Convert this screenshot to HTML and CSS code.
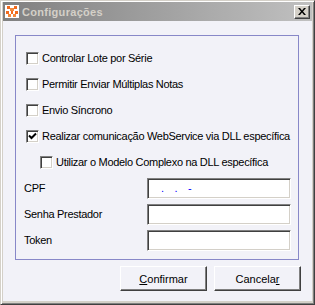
FILE: index.html
```html
<!DOCTYPE html>
<html lang="pt">
<head>
  <meta charset="UTF-8">
  <title>Configurações</title>
  <link rel="stylesheet" href="styles.css">
</head>
<body>

  <div class="window">
    <div class="titlebar">
      <svg class="app-icon" width="14" height="13" viewBox="0 0 14 13">
        <rect x="0" y="0" width="14" height="13" fill="#fff"/>
        <rect x="2" y="1" width="3" height="3" fill="#f26b1d"/>
        <rect x="9" y="1" width="3" height="3" fill="#f26b1d"/>
        <rect x="5" y="3" width="4" height="3" fill="#f58a3c"/>
        <rect x="1" y="6" width="3" height="3" fill="#f26b1d"/>
        <rect x="6" y="6" width="2" height="3" fill="#f26b1d"/>
        <rect x="10" y="6" width="3" height="3" fill="#f26b1d"/>
        <rect x="3" y="9" width="3" height="3" fill="#f58a3c"/>
        <rect x="8" y="9" width="3" height="3" fill="#f58a3c"/>
      </svg>
      <span class="title">Configurações</span>
      <button class="close" type="button">
        <svg width="8" height="7" viewBox="0 0 8 7">
          <path d="M0 0h2l2 2.5L6 0h2L5 3.5 8 7H6L4 4.5 2 7H0l3-3.5z" fill="#000"/>
        </svg>
      </button>
    </div>

    <div class="content">
      <div class="group">
        <label class="check"><span class="box"></span>Controlar Lote por Série</label>
        <label class="check"><span class="box"></span>Permitir Enviar Múltiplas Notas</label>
        <label class="check"><span class="box"></span>Envio Síncrono</label>
        <label class="check"><span class="box">
          <svg width="9" height="9" viewBox="0 0 9 9"><path d="M1 3.5l2.5 2.5L8 1.5" stroke="#000" stroke-width="2" fill="none"/></svg>
        </span>Realizar comunicação WebService via DLL específica</label>
        <label class="check sub"><span class="box"></span>Utilizar o Modelo Complexo na DLL específica</label>

        <div class="field">
          <span>CPF</span>
          <div class="input mask">&nbsp;&nbsp;&nbsp;.&nbsp;&nbsp;&nbsp;.&nbsp;&nbsp;&nbsp;-</div>
        </div>
        <div class="field">
          <span>Senha Prestador</span>
          <div class="input"></div>
        </div>
        <div class="field">
          <span>Token</span>
          <div class="input"></div>
        </div>
      </div>

      <div class="actions">
        <button type="button"><u>C</u>onfirmar</button>
        <button type="button">Cancela<u>r</u></button>
      </div>
    </div>
  </div>

</body>
</html>
```

FILE: styles.css
```css
body { margin: 0; font-family: "Liberation Sans", Arial, sans-serif; font-size: 11px; color: #000; background: #fff; }
.window { width: 315px; height: 305px; box-sizing: border-box; background: #d4d0c8; border: 1px solid; border-color: #d4d0c8 #404040 #404040 #d4d0c8; box-shadow: inset 1px 1px #fff, inset -1px -1px #808080; padding: 1px 2px 3px 2px; display: flex; flex-direction: column; }
.titlebar { height: 19px; display: flex; align-items: center; padding-left: 2px; padding-right: 2px; background: linear-gradient(to right, #808080, #c0c0c0); }
.app-icon { margin-right: 3px; }
.title { color: #d4d0c8; font-weight: bold; letter-spacing: 0.3px; flex: 1; }
.close { width: 16px; height: 14px; padding: 0; background: #d4d0c8; border: 1px solid; border-color: #fff #404040 #404040 #fff; box-shadow: inset -1px -1px #808080; display: flex; align-items: center; justify-content: center; }
.content { flex: 1; background: #f2f2f8; padding: 14px 13px 0 12px; }
.group { border: 1px solid #8888c8; padding: 9px 7px 6px 8px; letter-spacing: -0.3px; }
.check { height: 26px; display: flex; align-items: center; margin-left: 2px; }
.check.sub { margin-left: 16px; }
.box { width: 13px; height: 13px; box-sizing: border-box; margin-right: 3px; background: #fff; border: 1px solid; border-color: #808080 #fff #fff #808080; box-shadow: inset 1px 1px #404040, inset -1px -1px #d4d0c8; display: flex; align-items: center; justify-content: center; }
.field { height: 26px; display: grid; grid-template-columns: 123px 1fr; align-items: center; }
.input { height: 21px; box-sizing: border-box; background: #fff; border: 1px solid; border-color: #808080 #fff #fff #808080; box-shadow: inset 1px 1px #404040, inset -1px -1px #d4d0c8; padding: 3px 3px; line-height: 13px; }
.mask { color: #0000ff; letter-spacing: 0.3px; }
.actions { display: flex; justify-content: flex-end; gap: 7px; padding-top: 6px; padding-right: -2px; margin-right: -2px; }
.actions button { width: 87px; height: 25px; font-family: inherit; font-size: 11px; color: #000; background: #f2f2f8; border: 1px solid; border-color: #fff #404040 #404040 #fff; box-shadow: inset -1px -1px #808080; padding: 0; }
```
